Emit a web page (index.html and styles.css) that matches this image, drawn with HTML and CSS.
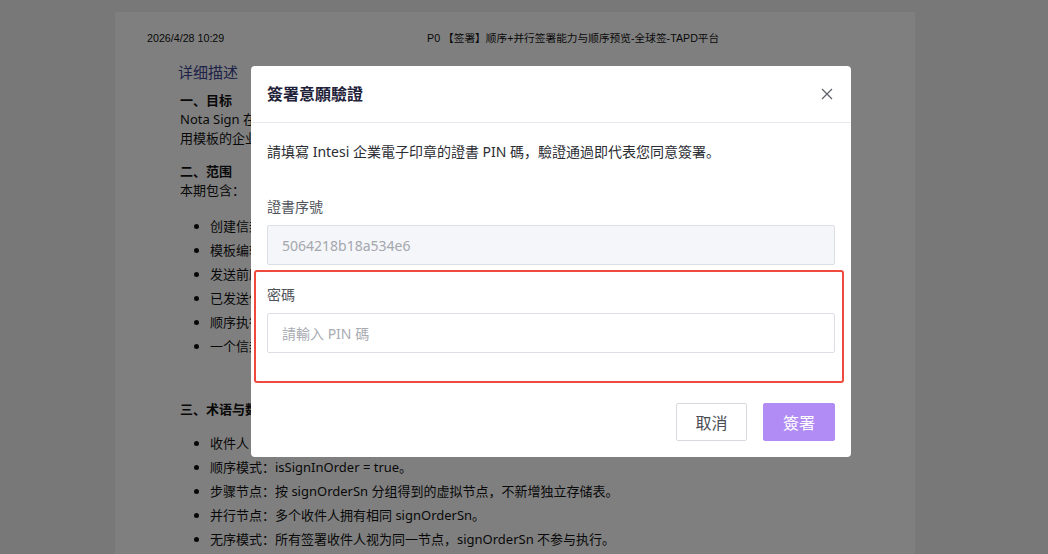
FILE: index.html
```html
<!DOCTYPE html>
<html lang="zh">
<head>
<meta charset="utf-8">
<title>簽署意願驗證</title>
<link rel="stylesheet" href="styles.css">
</head>
<body>
<div class="paper">
  <div class="print-head">
    <span class="ph-date">2026/4/28 10:29</span>
    <span class="ph-title">P0 【签署】顺序+并行签署能力与顺序预览-全球签-TAPD平台</span>
  </div>
  <div class="doc">
    <h2 class="doc-title">详细描述</h2>
    <div class="sec">
      <div class="sec-h">一、目标</div>
      <div class="line">Nota Sign 在现有签署流程中支持顺序签署与并行签署能力，并为使</div>
      <div class="line">用模板的企业提供顺序预览能力，提升签署流程配置的灵活性。</div>
    </div>
    <div class="sec sec-2">
      <div class="sec-h">二、范围</div>
      <div class="line">本期包含：</div>
      <ul class="list">
        <li>创建信封时支持设置签署顺序与并行签署</li>
        <li>模板编辑时支持配置签署顺序</li>
        <li>发送前顺序预览</li>
        <li>已发送信封的顺序展示</li>
        <li>顺序执行与通知逻辑</li>
        <li>一个信封内同时存在顺序与并行节点</li>
      </ul>
    </div>
    <div class="sec sec-3">
      <div class="sec-h">三、术语与数据模型</div>
      <ul class="list list-3">
        <li>收件人：信封中需要签署或抄送的对象。</li>
        <li>顺序模式：isSignInOrder = true。</li>
        <li>步骤节点：按 signOrderSn 分组得到的虚拟节点，不新增独立存储表。</li>
        <li>并行节点：多个收件人拥有相同 signOrderSn。</li>
        <li>无序模式：所有签署收件人视为同一节点，signOrderSn 不参与执行。</li>
      </ul>
    </div>
  </div>
</div>

<div class="overlay"></div>

<div class="modal" role="dialog">
  <div class="modal-head">
    <span class="modal-title">簽署意願驗證</span>
    <svg class="close" width="12" height="12" viewBox="0 0 12 12"><path d="M1 1L11 11M11 1L1 11" stroke="#5c5f66" stroke-width="1.2" fill="none"/></svg>
  </div>
  <div class="modal-body">
    <p class="desc">請填寫 Intesi 企業電子印章的證書 PIN 碼，驗證通過即代表您同意簽署。</p>
    <div class="field">
      <div class="label">證書序號</div>
      <div class="input input-disabled">5064218b18a534e6</div>
    </div>
    <div class="field field-2">
      <div class="label">密碼</div>
      <div class="input input-ph">請輸入 PIN 碼</div>
    </div>
  </div>
  <div class="modal-foot">
    <button class="btn btn-cancel">取消</button>
    <button class="btn btn-primary">簽署</button>
  </div>
  <div class="annotation"></div>
</div>
</body>
</html>
```

FILE: styles.css
```css
* { box-sizing: border-box; }
html, body { margin: 0; padding: 0; }
body {
  width: 1048px;
  height: 554px;
  overflow: hidden;
  background: #f0f0f0;
  font-family: "Noto Sans", "Noto Sans CJK SC", sans-serif;
  color: #111;
}
.paper {
  margin: 12px 0 0 115px;
  width: 800px;
  height: 560px;
  background: #fff;
  padding: 19px 0 0 32px;
  overflow: hidden;
  white-space: nowrap;
}
.print-head {
  display: flex;
  font-family: "Liberation Sans", "Noto Sans CJK SC", sans-serif;
  font-size: 10.7px;
  line-height: 14px;
  color: #111;
}
.ph-date { width: 280px; }
.doc { padding-left: 33px; }
.doc-title {
  margin: 16px 0 0 -2px;
  font-size: 15px;
  line-height: 22px;
  font-weight: 400;
  color: #3c4690;
}
.sec { margin-top: 8px; font-size: 13px; line-height: 19px; }
.sec-h { font-weight: 700; }
.sec-2 { margin-top: 14px; }
.sec-3 { margin-top: 42px; }
.list {
  margin: 14px 0 0;
  padding-left: 30px;
  line-height: 24px;
}
.list-3 { margin-top: 12px; }

.overlay {
  position: fixed;
  inset: 0;
  background: rgba(0, 0, 0, 0.5);
}

.modal {
  position: absolute;
  left: 251px;
  top: 66px;
  width: 600px;
  height: 391px;
  background: #fff;
  border-radius: 4px;
  font-family: "Noto Sans", "Noto Sans CJK TC", sans-serif;
}
.modal-head {
  height: 57px;
  padding: 0 18px 0 16px;
  display: flex;
  align-items: center;
  justify-content: space-between;
  border-bottom: 1px solid #e8e9ee;
}
.modal-title {
  font-size: 16px;
  font-weight: 600;
  color: #1e2138;
  margin-top: -2px;
}
.modal-body { padding: 18px 16px 0; }
.desc {
  margin: 0;
  font-size: 14px;
  line-height: 22px;
  color: #2b2d33;
}
.field { margin-top: 34px; }
.field-2 { margin-top: 20px; }
.label {
  font-size: 14px;
  line-height: 20px;
  color: #50535a;
  margin-bottom: 8px;
}
.input {
  height: 40px;
  border: 1px solid #dedfe6;
  border-radius: 2px;
  padding: 0 14px;
  display: flex;
  align-items: center;
  font-size: 14px;
  background: #fff;
}
.input-disabled { background: #f5f6f9; color: #a4a7ae; }
.input-ph { color: #a9abb2; }
.modal-foot {
  display: flex;
  justify-content: flex-end;
  gap: 16px;
  padding: 50px 16px 0;
}
.btn {
  height: 38px;
  width: 71px;
  border-radius: 2px;
  font-family: "Noto Sans", "Noto Sans CJK TC", sans-serif;
  font-size: 16px;
  padding: 0;
}
.btn-cancel { background: #fff; border: 1px solid #d9dae0; color: #4a4d55; }
.btn-primary { width: 72px; background: #b18cf5; border: 1px solid #b18cf5; color: #fff; }
.annotation {
  position: absolute;
  left: 3px;
  top: 204px;
  width: 590px;
  height: 113px;
  border: 2px solid #ef4a3d;
  border-radius: 3px;
  pointer-events: none;
}
```
